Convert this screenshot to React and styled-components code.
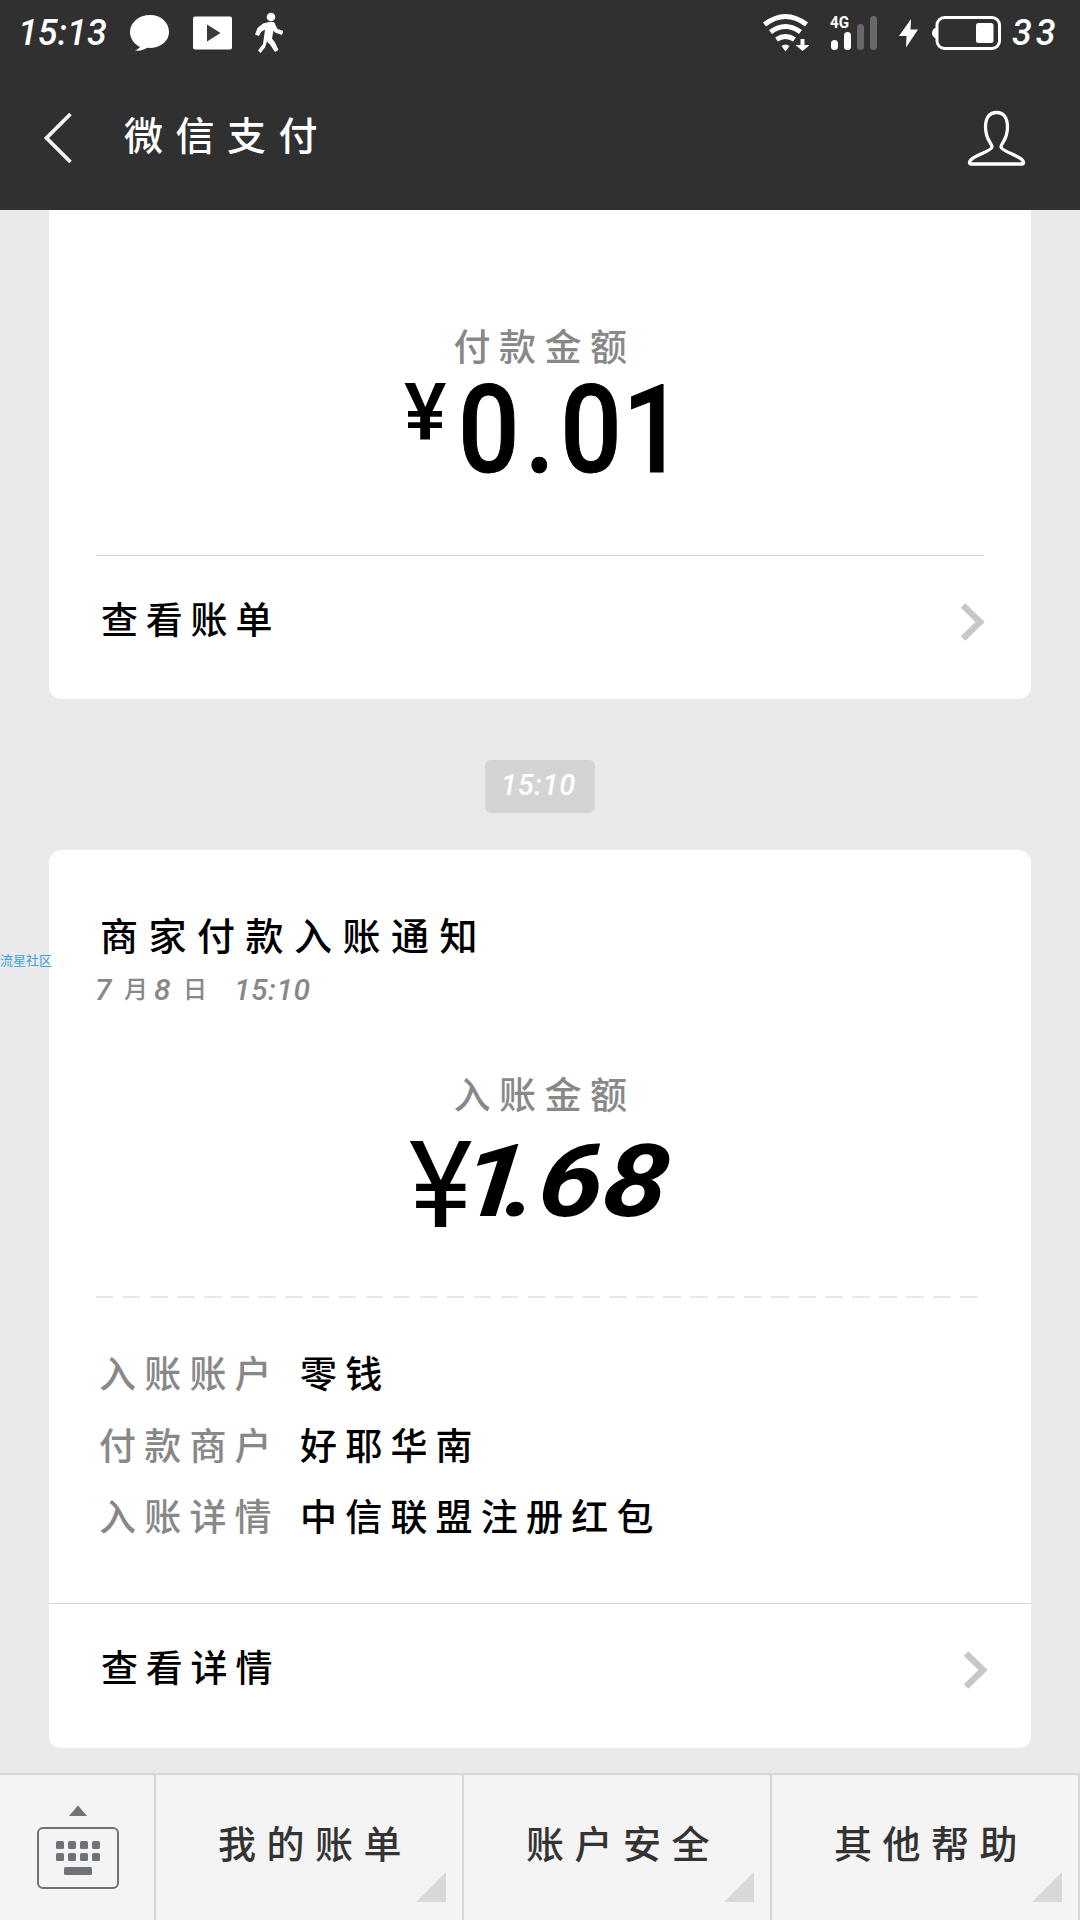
import React from 'react';
import styled, { createGlobalStyle } from 'styled-components';

const GlobalStyle = createGlobalStyle`
    * {
        box-sizing: border-box;
    }

    body {
        margin: 0;
        background: #eaeaea;
        font-family: Lato, "Noto Sans CJK SC", sans-serif;
    }
`

const Page = styled.div`
    position: relative;
    display: flex;
    flex-direction: column;
    width: 1080px;
    height: 1920px;
    overflow: hidden;
    background: #eaeaea;
`

const Header = styled.header`
    flex: none;
    height: 210px;
    background: #303030;
    color: #fff;
`

const StatusBar = styled.div`
    display: flex;
    justify-content: space-between;
    height: 66px;
    padding: 0 17px 0 18px;
`

const StatusGroup = styled.div`
    display: flex;
    align-items: center;
    height: 66px;
`

const StatusText = styled.span`
    width: ${props => props.$width}px;
    margin-left: ${props => props.$gap || 0}px;
    font: italic 500 36px/60px Roboto, sans-serif;
    letter-spacing: ${props => props.$spacing || 0}px;
    white-space: nowrap;
`

const StatusIcon = styled.svg`
    flex: none;
    display: block;
    width: ${props => props.$width}px;
    height: 66px;
    margin-left: ${props => props.$gap}px;
`

const TitleBar = styled.div`
    display: flex;
    align-items: center;
    height: 144px;
    padding: 0 54px 0 43px;
`

const BackIcon = styled.svg`
    width: 30px;
    height: 54px;
`

const Title = styled.h1`
    flex: 1;
    margin: -6px 0 0 51px;
    font-size: 39px;
    font-weight: 500;
    line-height: 54px;
    letter-spacing: 12.5px;
`

const PersonIcon = styled.svg`
    width: 60px;
    height: 56px;
`

const Feed = styled.main`
    flex: 1;
    display: flex;
    flex-direction: column;
    align-items: center;
`

const Card = styled.section`
    display: flex;
    flex-direction: column;
    width: 982px;
    height: ${props => props.$height}px;
    padding-top: ${props => props.$top}px;
    background: #fff;
    border-radius: ${props => (props.$cut ? '0 0 12px 12px' : '12px')};
`

const Caption = styled.div`
    height: 50px;
    margin-top: ${props => props.$top || 0}px;
    padding-left: 9px;
    color: #888;
    font-size: 37px;
    font-weight: 500;
    line-height: 50px;
    letter-spacing: 8.5px;
    text-align: center;
`

const Amount = styled.div`
    display: flex;
    align-items: flex-start;
    height: 120px;
    margin-top: ${props => props.$top || 0}px;
    padding-left: ${props => props.$left}px;
    color: #000;
    font: 500 123px/117px Roboto, sans-serif;
`

const Currency = styled.span`
    width: ${props => props.$width}px;
    font-size: ${props => props.$size}px;
    font-weight: ${props => props.$weight};
    line-height: ${props => props.$line}px;
`

const NarrowNumber = styled.span`
    letter-spacing: 6px;
    transform: scaleX(0.88);
    transform-origin: 0 50%;
    -webkit-text-stroke: 1px #000;

    & b {
        margin-left: -5px;
        font-weight: 500;
    }
`

const BrushNumber = styled.span`
    margin: -4px 0 0 -14px;
    font: italic 700 101px/120px Roboto, sans-serif;
    transform: scaleX(1.15) skewX(-6deg);
    transform-origin: 0 75%;

    & i {
        margin-right: -17px;
    }
`

const Divider = styled.hr`
    flex: none;
    width: ${props => (props.$full ? '100%' : '888px')};
    height: 1px;
    margin: ${props => props.$top}px 0 0 ${props => (props.$full ? 0 : 47)}px;
    border: 0;
    background: #d5d5d5;
`

const DashedDivider = styled.div`
    flex: none;
    width: 882px;
    height: 2px;
    margin: ${props => props.$top}px 0 0 47px;
    background: repeating-linear-gradient(to right, #e8e8e8 0 17.5px, transparent 17.5px 27px);
`

const LinkRow = styled.div`
    flex: 1;
    display: flex;
    align-items: center;
    justify-content: space-between;
    padding: 0 ${props => props.$right}px 0 52px;
    color: #000;
    font-size: 37px;
    font-weight: 500;
    letter-spacing: 7.8px;

    & span {
        margin-top: -20px;
    }

    & svg {
        width: 26px;
        height: 40px;
        margin-top: -12px;
    }
`

const TimePill = styled.div`
    flex: none;
    width: 110px;
    height: 53px;
    margin: 61px 0 37px;
    padding-right: 3px;
    background: #d4d4d4;
    border-radius: 6px;
    color: #fff;
    font: italic 500 29px/51px Roboto, sans-serif;
    letter-spacing: 0.7px;
    text-align: center;
`

const CardTitle = styled.h2`
    margin: 0 0 0 51px;
    color: #000;
    font-size: 38px;
    font-weight: 500;
    line-height: 50px;
    letter-spacing: 10.5px;
`

const CardDate = styled.div`
    display: flex;
    height: 44px;
    margin: 7px 0 0 46px;
    color: #888;
    font-size: 30px;
    line-height: 44px;

    & i {
        padding-top: 1px;
        font-family: Roboto, sans-serif;
        font-weight: 500;
    }

    & i:first-child, & i:nth-child(3) {
        width: 29px;
    }

    & span {
        width: 30px;
        font-size: 24px;
        font-weight: 500;
    }

    & i:last-child {
        margin-left: 21px;
        letter-spacing: 0.5px;
    }
`

const Details = styled.dl`
    display: grid;
    grid-template-columns: 201px 1fr;
    grid-auto-rows: 71.5px;
    margin: 40px 0 0 50px;
    font-size: 37px;
    font-weight: 500;
    line-height: 71px;
    letter-spacing: 8.2px;

    & dt {
        color: #888;
    }

    & dd {
        margin: 0;
        color: #000;
    }
`

const Watermark = styled.div`
    position: absolute;
    top: 951px;
    left: 0;
    color: #3d9fe6;
    font-size: 13px;
    line-height: 18px;
`

const BottomBar = styled.nav`
    flex: none;
    display: flex;
    height: 147px;
    border-top: 2px solid #d6d6d6;
    background: #f4f4f4;
`

const KeyboardButton = styled.div`
    width: 156px;
    border-right: 2px solid #d6d6d6;

    & svg {
        display: block;
        margin: 28px 0 0 36px;
    }
`

const MenuButton = styled.div`
    position: relative;
    width: 308px;
    padding: 41px 0 0 62px;
    border-right: 2px solid #d6d6d6;
    color: #333;
    font-size: 38px;
    font-weight: 500;
    line-height: 54px;
    letter-spacing: 10.5px;

    &::after {
        content: '';
        position: absolute;
        right: 16px;
        bottom: 18px;
        border-bottom: 30px solid #d8d8d8;
        border-left: 30px solid transparent;
    }
`

const Chevron = () => (
    <svg viewBox="0 0 26 40">
        <path d="M3 3.500 20 20 3 36.500" fill="none" stroke="#c7c7cb" strokeWidth="6.500" />
    </svg>
)

const details = [
    ['入账账户', '零钱'],
    ['付款商户', '好耶华南'],
    ['入账详情', '中信联盟注册红包'],
]

const menus = ['我的账单', '账户安全', '其他帮助']

export default function App() {
    return (
        <Page>
            <GlobalStyle />
            <Header>
                <StatusBar>
                    <StatusGroup>
                        <StatusText $width={94}>15:13</StatusText>
                        <StatusIcon $width={40} $gap={18} viewBox="0 0 40 66" fill="#fff">
                            <path d="M20 15C9 15 0 22.500 0 32c0 6.500 4 12 10 15-1 1.500-3 2.500-5 3.500 5 .6 9-.5 12-2.700C29 49 39 42 39 32 39 22.500 31 15 20 15z" />
                        </StatusIcon>
                        <StatusIcon $width={40} $gap={23} viewBox="0 0 40 66">
                            <rect x="0" y="16.500" width="39" height="33" rx="2" fill="#fff" />
                            <path d="M14 24.500v17L27.500 33z" fill="#3a3a3a" />
                        </StatusIcon>
                        <StatusIcon $width={28} $gap={22} viewBox="0 0 28 66">
                            <circle cx="16" cy="17" r="4.300" fill="#fff" />
                            <path d="M8 23.500 14 22h5l3.500 7 6 2-1.500 4-7-2.500-1.500-2-1.500 8 3 4 3.500 7.500-3.500 2-5-7.500-3-3-2 6L5.500 53 3 50.500l5-6.500L10 29.500 6 32l-2 4-4-1.500L2.500 28z" fill="#fff" />
                        </StatusIcon>
                    </StatusGroup>
                    <StatusGroup>
                        <StatusIcon $width={46} $gap={0} viewBox="0 0 46 66" fill="none" stroke="#fff" strokeWidth="5">
                            <path d="M1.500 24.500Q22.500 8.500 43.500 24.500M7.500 32Q22.500 21 37.500 32M13.500 39.500Q22.500 33.500 31.500 39.500" />
                            <path d="M18.500 46q4-3 8 0l-4 5.500z" fill="#fff" stroke="none" />
                            <path d="M37.500 39h4v6H47l-7.500 6-7-6h5z" fill="#fff" stroke="none" />
                        </StatusIcon>
                        <StatusIcon $width={48} $gap={21} viewBox="0 0 48 66" fill="#fff">
                            <text x="0" y="27.500" fontFamily="Roboto" fontWeight="700" fontSize="16" textLength="19" lengthAdjust="spacingAndGlyphs">4G</text>
                            <rect x="1" y="40" width="7" height="10" rx="3.500" />
                            <rect x="14" y="32" width="7" height="18" rx="3.500" />
                            <rect x="27" y="24" width="7" height="26" rx="3.500" fill="#686868" />
                            <rect x="40" y="16" width="7" height="34" rx="3.500" fill="#686868" />
                        </StatusIcon>
                        <StatusIcon $width={20} $gap={21} viewBox="0 0 20 66" fill="#fff">
                            <path d="M12 19 0 36h7.500L7 47.500 19 29.500h-7.500z" />
                        </StatusIcon>
                        <StatusIcon $width={70} $gap={12} viewBox="0 0 70 66">
                            <path d="M6 27q-5 2-5 6t5 6z" fill="#fff" />
                            <rect x="6" y="17.500" width="62.500" height="31" rx="7.500" fill="none" stroke="#fff" strokeWidth="3" />
                            <rect x="45" y="23" width="17.500" height="20" rx="2.500" fill="#fff" />
                        </StatusIcon>
                        <StatusText $width={51} $gap={11} $spacing={4}>33</StatusText>
                    </StatusGroup>
                </StatusBar>
                <TitleBar>
                    <BackIcon viewBox="0 0 30 54">
                        <path d="M27.500 3 3.500 27l24 24" fill="none" stroke="#f4f4f4" strokeWidth="3.800" />
                    </BackIcon>
                    <Title>微信支付</Title>
                    <PersonIcon viewBox="0 0 60 56" fill="none" stroke="#fff" strokeWidth="3.300" strokeLinejoin="round">
                        <path d="M26 37c0-4-6.500-7-6.500-20C19.500 7 24 2.500 30.500 2.500S41.500 7 41.500 17c0 13-6.500 16-6.500 20 1 5 22.500 9.500 22.500 15.500 0 1-.5 1.500-1.500 1.500H5c-1 0-1.500-.5-1.500-1.500C3.500 46.500 25 42 26 37z" />
                    </PersonIcon>
                </TitleBar>
            </Header>
            <Feed>
                <Card $cut $height={489} $top={112}>
                    <Caption>付款金额</Caption>
                    <Amount $left={355}>
                        <Currency $width={54} $size={80} $weight={500} $line={83}>¥</Currency>
                        <NarrowNumber>0.0<b>1</b></NarrowNumber>
                    </Amount>
                    <Divider $top={63} />
                    <LinkRow $right={45}>
                        <span>查看账单</span>
                        <Chevron />
                    </LinkRow>
                </Card>
                <TimePill>15:10</TimePill>
                <Card $height={898} $top={60}>
                    <CardTitle>商家付款入账通知</CardTitle>
                    <CardDate>
                        <i>7</i>
                        <span>月</span>
                        <i>8</i>
                        <span>日</span>
                        <i>15:10</i>
                    </CardDate>
                    <Caption $top={59}>入账金额</Caption>
                    <Amount $left={360} $top={6}>
                        <Currency $width={63} $size={121} $weight={400} $line={120}>¥</Currency>
                        <BrushNumber><i>1</i>.68</BrushNumber>
                    </Amount>
                    <DashedDivider $top={50} />
                    <Details>
                        {details.map(([label, value]) => (
                            <React.Fragment key={label}>
                                <dt>{label}</dt>
                                <dd>{value}</dd>
                            </React.Fragment>
                        ))}
                    </Details>
                    <Divider $full $top={50} />
                    <LinkRow $right={42}>
                        <span>查看详情</span>
                        <Chevron />
                    </LinkRow>
                </Card>
            </Feed>
            <BottomBar>
                <KeyboardButton>
                    <svg width="84" height="92" viewBox="0 0 84 92" fill="#6f7377">
                        <path d="M42 2.500 51 13H33z" />
                        <rect x="2" y="25" width="80" height="60" rx="5" fill="none" stroke="#6f7377" strokeWidth="2" />
                        {[38, 50].map(y => [20, 32, 44, 56].map(x => (
                            <rect key={`${x}-${y}`} x={x} y={y} width="8" height="8" rx="1.500" />
                        )))}
                        <rect x="28" y="64" width="28" height="8" rx="1.500" />
                    </svg>
                </KeyboardButton>
                {menus.map(label => <MenuButton key={label}>{label}</MenuButton>)}
            </BottomBar>
            <Watermark>流星社区</Watermark>
        </Page>
    )
}
